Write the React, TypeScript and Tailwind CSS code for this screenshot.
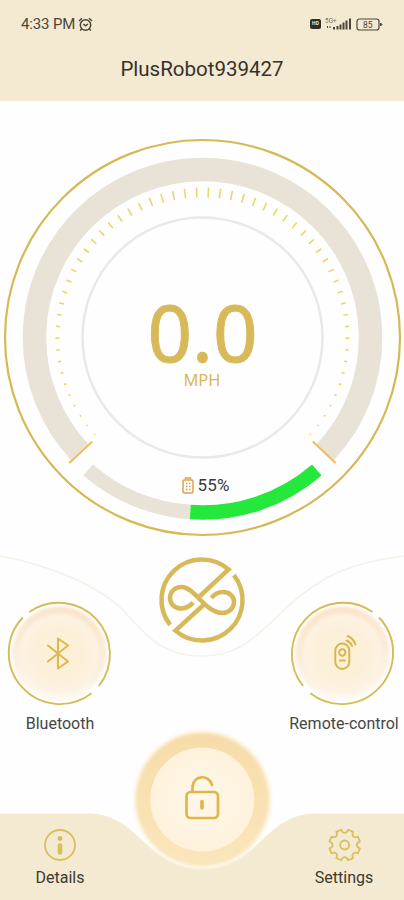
import React from "react";

const CX = 202.5;
const CY = 235.5;

const polar = (r: number, deg: number): [number, number] => {
  const a = (deg * Math.PI) / 180;
  return [CX + r * Math.cos(a), CY + r * Math.sin(a)];
};

// Arc drawn clockwise on screen from one angle to another.
const arc = (r: number, from: number, to: number) => {
  const [x1, y1] = polar(r, from);
  const [x2, y2] = polar(r, to);
  return `M${x1} ${y1}A${r} ${r} 0 ${to - from > 180 ? 1 : 0} 1 ${x2} ${y2}`;
};

const line = (r1: number, r2: number, deg: number) => {
  const [x1, y1] = polar(r1, deg);
  const [x2, y2] = polar(r2, deg);
  return `M${x1} ${y1}L${x2} ${y2}`;
};

const ticks = Array.from({ length: 29 }, (_, i) => {
  const half = Math.max(0.6, 5 - i * 0.16);
  const off = 2.3 + 4.63 * i;
  return line(145 - half, 145 + half, -90 - off) + line(145 - half, 145 + half, -90 + off);
}).join("");

function StatusBar() {
  return (
    <div className="flex h-12 items-center justify-between pl-[21px] pr-[21px] text-[#4a463c]">
      <div className="flex items-center gap-[3px]">
        <span className="text-[15px] leading-none tracking-[-0.15px]">4:33 PM</span>
        <svg width="15" height="15" viewBox="0 0 15 15" fill="none" stroke="currentColor" strokeWidth="1.5">
          <circle cx="7.5" cy="8" r="5.2" />
          <path d="M1 4 4 1.3M14 4l-3-2.7M5.3 7l2.2 1.8L10 7M3.5 12l-1.3 1.6M11.5 12l1.3 1.6" />
        </svg>
      </div>
      <div className="flex items-center gap-[4px]">
        <span className="flex h-[10px] w-[11px] items-center justify-center rounded-[2px] bg-[#302d26] text-[5px] font-bold text-[#f3ead1]">HD</span>
        <svg width="27" height="14" viewBox="0 0 27 14" fill="currentColor">
          <text x="0" y="5.5" fontSize="6.5" opacity=".75">5G+</text>
          <path d="M2 9h1v2H2zM4.500 9h1v2h-1zM8 10h2v2.500H8zM11.500 9h2v3.500h-2zM14.500 7.500h2v5h-2zM17.500 5.500h2v7h-2zM20.500 3.500h2v9h-2zM24 1.500h2v11h-2z" />
        </svg>
        <svg width="27" height="13" viewBox="0 0 27 13" fill="none" stroke="currentColor">
          <rect x="1" y="1" width="22" height="11" rx="2.5" strokeWidth="1.2" />
          <path d="M24.500 5v3l1.500-1.500z" fill="currentColor" />
          <text x="7" y="9.500" fontSize="8.500" fill="currentColor" stroke="none">85</text>
        </svg>
      </div>
    </div>
  );
}

function Gauge() {
  return (
    <section className="relative flex h-[450px] flex-col items-center">
      <svg className="absolute inset-0" width="404" height="450" viewBox="0 0 404 450" fill="none">
        <circle cx={CX} cy={CY} r="197.5" stroke="#d6b955" strokeWidth="2.2" />
        <path d={arc(168, 137, 403)} stroke="#e9e2d6" strokeWidth="23.5" />
        <path d={ticks} stroke="#f0d36c" strokeWidth="1.6" />
        <circle cx={CX} cy={CY} r="120" stroke="#ebe9e5" strokeWidth="2.5" />
        <path d={line(151.5, 183, 136.7) + line(151.5, 183, 43.3)} stroke="#f0bd50" strokeWidth="2" />
        <path d={arc(175, 94, 130.8)} stroke="#e9e2d6" strokeWidth="14.5" />
        <path d={arc(175, 49.2, 94)} stroke="#24e83b" strokeWidth="14.5" />
      </svg>
      <div className="relative mt-[195px] pl-px font-['Noto_Sans',sans-serif] text-[78px] leading-[70px] text-[#d8b95a] [-webkit-text-stroke:1px_#d8b95a]">0.0</div>
      <div className="relative mt-[4px] font-['Noto_Sans',sans-serif] text-[16.5px] leading-[18px] text-[#d8b95a]">MPH</div>
      <div className="relative mt-[86px] flex items-center gap-[3px] pl-2">
        <svg width="12" height="17" viewBox="0 0 12 17" fill="none" stroke="#d9a151">
          <rect x="1" y="3" width="10" height="13" rx="1.5" strokeWidth="1.5" />
          <path d="M3.500 2.500V1h5v1.500" strokeWidth="1.5" />
          <path d="M4 6.500h1.500M7 6.500h1.500M4 9.500h1.500M7 9.500h1.500M4 12.500h1.500M7 12.500h1.500" strokeWidth="1.3" />
        </svg>
        <span className="text-[17px] leading-[20px] tracking-[0.2px] text-[#3a3a3a]">55%</span>
      </div>
    </section>
  );
}

function RoundControl({ label, mirrored, children }: { label: string; mirrored?: boolean; children: React.ReactNode }) {
  const id = mirrored ? "discRight" : "discLeft";
  return (
    <div className="flex w-[120px] flex-col items-center">
      <svg width="106" height="106" viewBox={mirrored ? "-51.5 -53.500 106 106" : "-52.3 -53.500 106 106"} fill="none" className="overflow-visible">
        <defs>
          <radialGradient id={id}>
            <stop offset="0" stopColor="#fef0d3" />
            <stop offset=".6" stopColor="#fdf0da" />
            <stop offset="1" stopColor="#fdf2e3" />
          </radialGradient>
          <linearGradient id={id + "Rim"} x1={mirrored ? ".35" : ".65"} y1="0" x2=".5" y2="1">
            <stop offset="0" stopColor="#f9e4c8" />
            <stop offset=".5" stopColor="#fbecd9" />
            <stop offset="1" stopColor="#fdf9ef" />
          </linearGradient>
          <filter id={id + "Soft"} x="-20%" y="-20%" width="140%" height="140%">
            <feGaussianBlur stdDeviation="1.6" />
          </filter>
        </defs>
        <circle r="47" fill={`url(#${id}Rim)`} filter={`url(#${id}Soft)`} />
        <circle r="40" fill={`url(#${id})`} filter={`url(#${id}Soft)`} />
        <g transform={mirrored ? "scale(-1 1)" : undefined} stroke="#d7bb59" strokeWidth="1.9">
          <path d="M-30-41.500A51.300 51.300 0 0 1 39.500 32.500M32.200 39.800A51.300 51.300 0 0 1-36.500-36" />
        </g>
        {children}
      </svg>
      <span className="mt-[7px] whitespace-nowrap text-[16px] leading-[22px] text-[#464646]">{label}</span>
    </div>
  );
}

function Logo() {
  return (
    <svg className="overflow-visible" width="88" height="88" viewBox="158 556 88 88" fill="none" stroke="#d8b95a" strokeWidth="4.5">
      <path d="M170.100 624.900A40.500 40.500 0 0 1 228.600 569.400L199.500 596.500" />
      <path d="M204 604.500 175.400 630.600A40.500 40.500 0 0 0 233.900 575.100" />
      <path d="M193 602.500C189 607.500 184.500 608.500 180.500 608.500C174 608 170 603.500 170 598C170 591.500 175 587 181.500 587C195 587 205 613 222.500 613C229.500 612.500 234 608 234 602C234 596 229 592 223 592C218 592 214.500 594 211.500 598" />
    </svg>
  );
}

function FooterItem({ label, children }: { label: string; children: React.ReactNode }) {
  return (
    <div className="flex w-[120px] flex-col items-center pt-[93px]">
      <svg width="34" height="34" viewBox="-17 -17 34 34" fill="none" stroke="#d9c05e" strokeWidth="1.8">{children}</svg>
      <span className="mt-[5px] text-[16px] leading-[22px] text-[#3c3931]">{label}</span>
    </div>
  );
}

// Eight flat teeth joined by curved notches.
const gear = (() => {
  const at = (deg: number, r: number) => {
    const a = (deg * Math.PI) / 180;
    return `${(r * Math.cos(a)).toFixed(2)} ${(r * Math.sin(a)).toFixed(2)}`;
  };
  let d = "";
  for (let i = 0; i < 8; i++) {
    const c = i * 45 + 22.5;
    d += `${i ? "L" : "M"}${at(c - 10, 15.6)}L${at(c + 10, 15.6)}C${at(c + 13, 11.2)} ${at(c + 32, 11.2)} ${at(c + 35, 15.6)}`;
  }
  return d + "Z";
})();

export default function App() {
  return (
    <main className="relative flex h-[900px] w-[404px] flex-col overflow-hidden bg-[#fefefe] font-[Roboto,sans-serif]">
      <header className="h-[101px] bg-[#f3ead1]">
        <StatusBar />
        <h1 className="mt-[8px] text-center text-[20.5px] leading-[26px] text-[#34322c]">PlusRobot939427</h1>
      </header>

      <div className="pt-px">
        <Gauge />
      </div>

      <section className="relative flex h-[183px] items-start justify-between">
        <svg className="absolute inset-0" width="404" height="183" viewBox="0 552 404 183" fill="none">
          <path d="M0 556C50 565 98 586 122 609C145 635 162 656 202 656C242 656 260 632 285 609C320 576 350 563 404 556" stroke="#f3f2ea" strokeWidth="1.5" />
        </svg>
        <div className="relative mt-[48px]">
          <RoundControl label="Bluetooth">
            <path d="M-10-8 10 8 0 15V-15L10-8-10 8" transform="translate(-1.3 0)" stroke="#d9bb55" strokeWidth="2.1" strokeLinejoin="round" strokeLinecap="round" />
          </RoundControl>
        </div>
        <div className="absolute left-[158px] top-[4px]"><Logo /></div>
        <div className="relative mt-[48px]">
          <RoundControl label="Remote-control" mirrored>
            <g stroke="#d7b54f" strokeWidth="1.9" strokeLinecap="round">
              <rect x="-7.2" y="-10" width="14" height="25.5" rx="7" />
              <circle cx="-.2" cy="-1" r="3.200" />
              <path d="M-2.700 7h5M4-13A10 10 0 0 1 9.500-7.500M5-17.500A14 14 0 0 1 13-9" />
            </g>
          </RoundControl>
        </div>
      </section>

      <footer className="relative flex h-[165px] justify-between">
        <svg className="absolute bottom-0 left-0" width="404" height="176" viewBox="0 724 404 176" fill="none">
          <defs>
            <filter id="glow" x="-20%" y="-20%" width="140%" height="140%"><feGaussianBlur stdDeviation="1.700" /></filter>
            <linearGradient id="ring" x1="0" y1="0" x2="0" y2="1">
              <stop offset="0" stopColor="#f6dca8" />
              <stop offset="1" stopColor="#fae6bc" />
            </linearGradient>
            <radialGradient id="core">
              <stop offset="0" stopColor="#fff7e9" />
              <stop offset="1" stopColor="#fef2dc" />
            </radialGradient>
          </defs>
          <path d="M0 813.500H88C112 813.500 126 825 142 840C159 857 178 868 202 868C226 868 245 857 262 840C278 825 292 813.500 316 813.500H404V900H0Z" fill="#f3ead1" />
          <circle cx="202.500" cy="799.500" r="69.500" fill="#fef6e6" filter="url(#glow)" />
          <circle cx="202.500" cy="799.500" r="66.500" fill="url(#ring)" filter="url(#glow)" />
          <circle cx="202.300" cy="799.500" r="52" fill="url(#core)" />
        </svg>
        <div className="relative">
          <FooterItem label="Details">
            <circle r="15" />
            <circle cy="-6.500" r="2.400" fill="#d9bd5c" stroke="none" />
            <path d="M0 .5V7.500" strokeWidth="4.600" strokeLinecap="round" />
          </FooterItem>
        </div>
        <svg className="relative mt-[39px]" width="40" height="50" viewBox="182 774 40 50" fill="none" stroke="#dcb846" strokeWidth="2.7" strokeLinecap="round">
          <rect x="186.500" y="792" width="31.500" height="26" rx="4" />
          <path d="M192.500 791V788C192.500 774.500 209 774 212 785" />
          <path d="M202 801.500V808" strokeWidth="3.600" />
        </svg>
        <div className="relative">
          <FooterItem label="Settings">
            <path d={gear} strokeLinejoin="round" transform="translate(.7 0)" />
            <circle cx=".7" r="4.500" />
          </FooterItem>
        </div>
      </footer>
    </main>
  );
}
